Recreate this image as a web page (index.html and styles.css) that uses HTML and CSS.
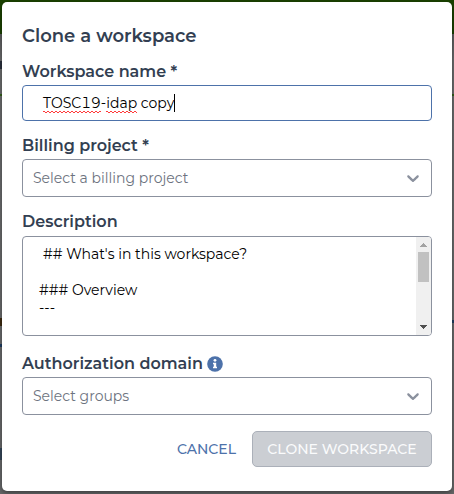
FILE: index.html
```
<!DOCTYPE html>
<html lang="en">
<head>
<meta charset="utf-8">
<title>Clone a workspace</title>
<link rel="stylesheet" href="styles.css">
</head>
<body>
<div class="overlay">
  <i class="mark mark-tab"></i><i class="mark mark-dot"></i><i class="mark mark-line"></i><i class="mark mark-line right"></i><i class="mark mark-text"></i><i class="mark mark-link"></i><i class="mark mark-link right"></i><i class="mark mark-foot"></i>
  <main class="modal">
    <h1 class="title"><span>Clone a workspace</span></h1>
    <div class="label label-name"><span>Workspace name *</span></div>
    <div class="field input"><span class="value"><span class="misspelled">TOSC19</span>-<span class="misspelled">idap</span> copy</span><i class="caret"></i></div>
    <div class="label label-billing"><span>Billing project *</span></div>
    <div class="field select">
      <span class="placeholder billing">Select a billing project</span>
      <svg class="chevron" viewBox="0 0 20 20"><path d="M4.516 7.548c.436-.446 1.043-.481 1.576 0L10 11.295l3.908-3.747c.533-.481 1.141-.446 1.574 0 .436.445.408 1.197 0 1.615-.406.418-4.695 4.502-4.695 4.502a1.095 1.095 0 0 1-1.576 0S4.924 9.581 4.516 9.163s-.436-1.17 0-1.615z"/></svg>
    </div>
    <div class="label label-description"><span>Description</span></div>
    <div class="field textarea">
      <div class="copy">
        <p class="line first"><span>## What's in this workspace?</span></p>
        <p class="line"></p>
        <p class="line overview"><span>### Overview</span></p>
        <p class="line dashes"><span>---</span></p>
      </div>
      <div class="scrollbar">
        <svg class="arrow" viewBox="0 0 15 15" shape-rendering="crispEdges"><path fill="#a3a3a3" d="M7 6h1v1h1v1h1v1h1v1H4V9h1V8h1V7h1z"/></svg>
        <i class="thumb"></i>
        <svg class="arrow down" viewBox="0 0 15 15" shape-rendering="crispEdges"><path fill="#505050" d="M4 5h7v1h-1v1H9v1H8v1H7V8H6V7H5V6H4z"/></svg>
      </div>
    </div>
    <div class="label label-domain"><span>Authorization domain</span>
      <svg class="info" viewBox="0 0 16 16"><circle cx="8" cy="8" r="7.8" fill="#4d72aa"/><circle cx="8" cy="4.3" r="1.4" fill="#fff"/><path fill="#fff" d="M6 6.7h3.2v4h.8v1.5H6v-1.5h.8V8.2H6z"/></svg>
    </div>
    <div class="field select">
      <span class="placeholder groups">Select groups</span>
      <svg class="chevron" viewBox="0 0 20 20"><path d="M4.516 7.548c.436-.446 1.043-.481 1.576 0L10 11.295l3.908-3.747c.533-.481 1.141-.446 1.574 0 .436.445.408 1.197 0 1.615-.406.418-4.695 4.502-4.695 4.502a1.095 1.095 0 0 1-1.576 0S4.924 9.581 4.516 9.163s-.436-1.17 0-1.615z"/></svg>
    </div>
    <footer class="actions">
      <span class="cancel">CANCEL</span>
      <span class="submit"><span class="submit-text">CLONE WORKSPACE</span></span>
    </footer>
  </main>
</div>
</body>
</html>
```
FILE: styles.css
```
* { box-sizing: border-box; }
body { margin: 0; font-family: Montserrat, Inter, "Open Sans", sans-serif; font-size: 14px; color: #333f52; }
.overlay { position: relative; width: 454px; height: 494px; padding: 2px; overflow: hidden; background: linear-gradient(#1a4200 0 34px, #5c5c5d 34px, #6a6b6c 60px, #666768 100%); }
.mark { position: absolute; left: 0; width: 2px; height: 2px; background: #33601a; }
.mark.right { left: 452px; }
.mark-tab { left: 51px; width: 2px; background: #78855f; }
.mark-dot { top: 61px; height: 8px; background: #29303c; }
.mark-line { top: 94px; }
.mark-text { top: 318px; height: 8px; background: #3c2a10; }
.mark-link { top: 344px; height: 3px; background: #1d3c60; }
.mark-link.right { top: 320px; }
.mark-foot { top: 448px; height: 12px; background: #344557; }
.modal { position: relative; display: flex; flex-direction: column; width: 450px; height: 489px; padding: 20px; border-radius: 5px; background: #fff; box-shadow: 0 2px 5px rgba(0, 0, 0, .4); }
.title { margin: 0; height: 28px; line-height: 28px; font-size: 18px; font-weight: 600; white-space: nowrap; }
.label { display: flex; align-items: center; height: 20px; font-size: 16px; font-weight: 600; line-height: 20px; white-space: nowrap; }
.label-name { margin: 12px 0 3px; }
.label-billing { margin: 15px 0 3px; }
.label-description { margin: 15px 0 4px; }
.label-domain { margin: 18px 0 3px; }
.field { display: flex; border: 1px solid #8b919e; border-radius: 4px; background: #fff; white-space: nowrap; }
.input { align-items: center; height: 36px; padding: 0 0 1px 20px; border-color: #4d72aa; color: #000; font-variant-numeric: tabular-nums; }
.select { align-items: center; justify-content: space-between; height: 38px; padding: 0 8px 0 10px; color: #6d7380; }
.chevron { width: 20px; height: 20px; fill: #8b919e; }
.caret { width: 1px; height: 18px; background: #000; }
.misspelled { position: relative; }
.misspelled::after { content: ""; position: absolute; left: 0; right: 0; bottom: -1px; height: 2px; background: linear-gradient(90deg, #ff3b3b 2px, transparent 2px) 0 0 / 4px 1px repeat-x, linear-gradient(90deg, transparent 2px, #ff3b3b 2px) 0 1px / 4px 1px repeat-x; }
.textarea { height: 100px; justify-content: space-between; overflow: hidden; color: #000; }
.copy { padding: 8px 0 0 16px; }
.line { margin: 0; height: 18px; line-height: 18px; }
.first { padding-left: 4px; }
.scrollbar { display: flex; flex-direction: column; width: 15px; height: 98px; background: #f0f0f0; }
.arrow { display: block; width: 15px; height: 15px; }
.thumb { width: 11px; height: 30px; margin-left: 2px; background: #c1c1c1; }
.down { margin-top: auto; }
.info { width: 16px; height: 16px; margin: -1px 0 0 4px; }
.actions { display: flex; justify-content: flex-end; align-items: center; gap: 16px; height: 36px; margin-top: 16px; font-size: 14px; font-weight: 500; white-space: nowrap; }
.cancel { color: #4d72aa; }
.submit { display: flex; align-items: center; justify-content: center; width: 180px; height: 36px; border: 1px solid #abb0b9; border-radius: 5px; background: #cbced3; color: #fafbfc; }
```
